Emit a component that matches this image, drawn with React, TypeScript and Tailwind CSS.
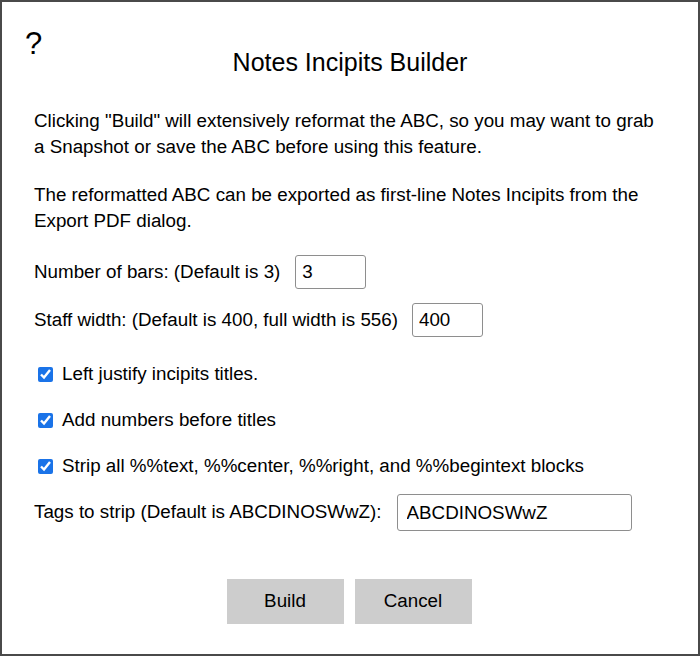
import { useState } from 'react';

export default function App() {
  const [bars, setBars] = useState('3');
  const [staffWidth, setStaffWidth] = useState('400');
  const [leftJustify, setLeftJustify] = useState(true);
  const [addNumbers, setAddNumbers] = useState(true);
  const [stripText, setStripText] = useState(true);
  const [tags, setTags] = useState('ABCDINOSWwZ');

  return (
    <div className="relative w-[700px] h-[656px] border-2 border-[#4a4a4a] bg-white text-black text-[18.8px] font-['Liberation_Sans',Arial,sans-serif]">
      {/* help icon */}
      <div className="absolute left-[23px] top-[22px] text-[31px] leading-[40px]">?</div>

      <h1 className="pt-[45px] text-center text-[25px] leading-[30px]">Notes Incipits Builder</h1>

      <div className="px-[32px]">
        <p className="mt-[31px] leading-[26px]">
          Clicking "Build" will extensively reformat the ABC, so you may want to grab a Snapshot or save the ABC before
          using this feature.
        </p>
        <p className="mt-[22px] leading-[26px]">
          The reformatted ABC can be exported as first-line Notes Incipits from the Export PDF dialog.
        </p>

        {/* number fields */}
        <div className="mt-[21px] flex items-center gap-[15px] h-[34px]">
          <span>Number of bars: (Default is 3)</span>
          <input
            type="text"
            value={bars}
            onChange={(e) => setBars(e.target.value)}
            className="w-[71px] h-[34px] border border-[#8e8e8e] rounded-[3px] px-[6px] outline-none"
          />
        </div>
        <div className="mt-[14px] flex items-center gap-[14px] h-[34px]">
          <span>Staff width: (Default is 400, full width is 556)</span>
          <input
            type="text"
            value={staffWidth}
            onChange={(e) => setStaffWidth(e.target.value)}
            className="w-[71px] h-[34px] border border-[#8e8e8e] rounded-[3px] px-[6px] outline-none"
          />
        </div>

        {/* options */}
        <div className="mt-[24px] flex flex-col gap-[20px]">
          <label className="flex items-center gap-[9px] pl-[4px] h-[26px]">
            <input
              type="checkbox"
              checked={leftJustify}
              onChange={(e) => setLeftJustify(e.target.checked)}
              className="w-[15px] h-[15px] accent-[#1a73e8]"
            />
            Left justify incipits titles.
          </label>
          <label className="flex items-center gap-[9px] pl-[4px] h-[26px]">
            <input
              type="checkbox"
              checked={addNumbers}
              onChange={(e) => setAddNumbers(e.target.checked)}
              className="w-[15px] h-[15px] accent-[#1a73e8]"
            />
            Add numbers before titles
          </label>
          <label className="flex items-center gap-[9px] pl-[4px] h-[26px]">
            <input
              type="checkbox"
              checked={stripText}
              onChange={(e) => setStripText(e.target.checked)}
              className="w-[15px] h-[15px] accent-[#1a73e8]"
            />
            Strip all %%text, %%center, %%right, and %%begintext blocks
          </label>
        </div>

        <div className="mt-[15px] flex items-center gap-[15px] h-[37px]">
          <span>Tags to strip (Default is ABCDINOSWwZ):</span>
          <input
            type="text"
            value={tags}
            onChange={(e) => setTags(e.target.value)}
            className="w-[235px] h-[37px] border border-[#8e8e8e] rounded-[3px] px-[9px] outline-none"
          />
        </div>

        <div className="mt-[48px] flex justify-center gap-[11px] pr-[2px]">
          <button className="w-[117px] h-[45px] bg-[#cdcdcd]">Build</button>
          <button className="w-[117px] h-[45px] bg-[#cdcdcd]">Cancel</button>
        </div>
      </div>
    </div>
  );
}
